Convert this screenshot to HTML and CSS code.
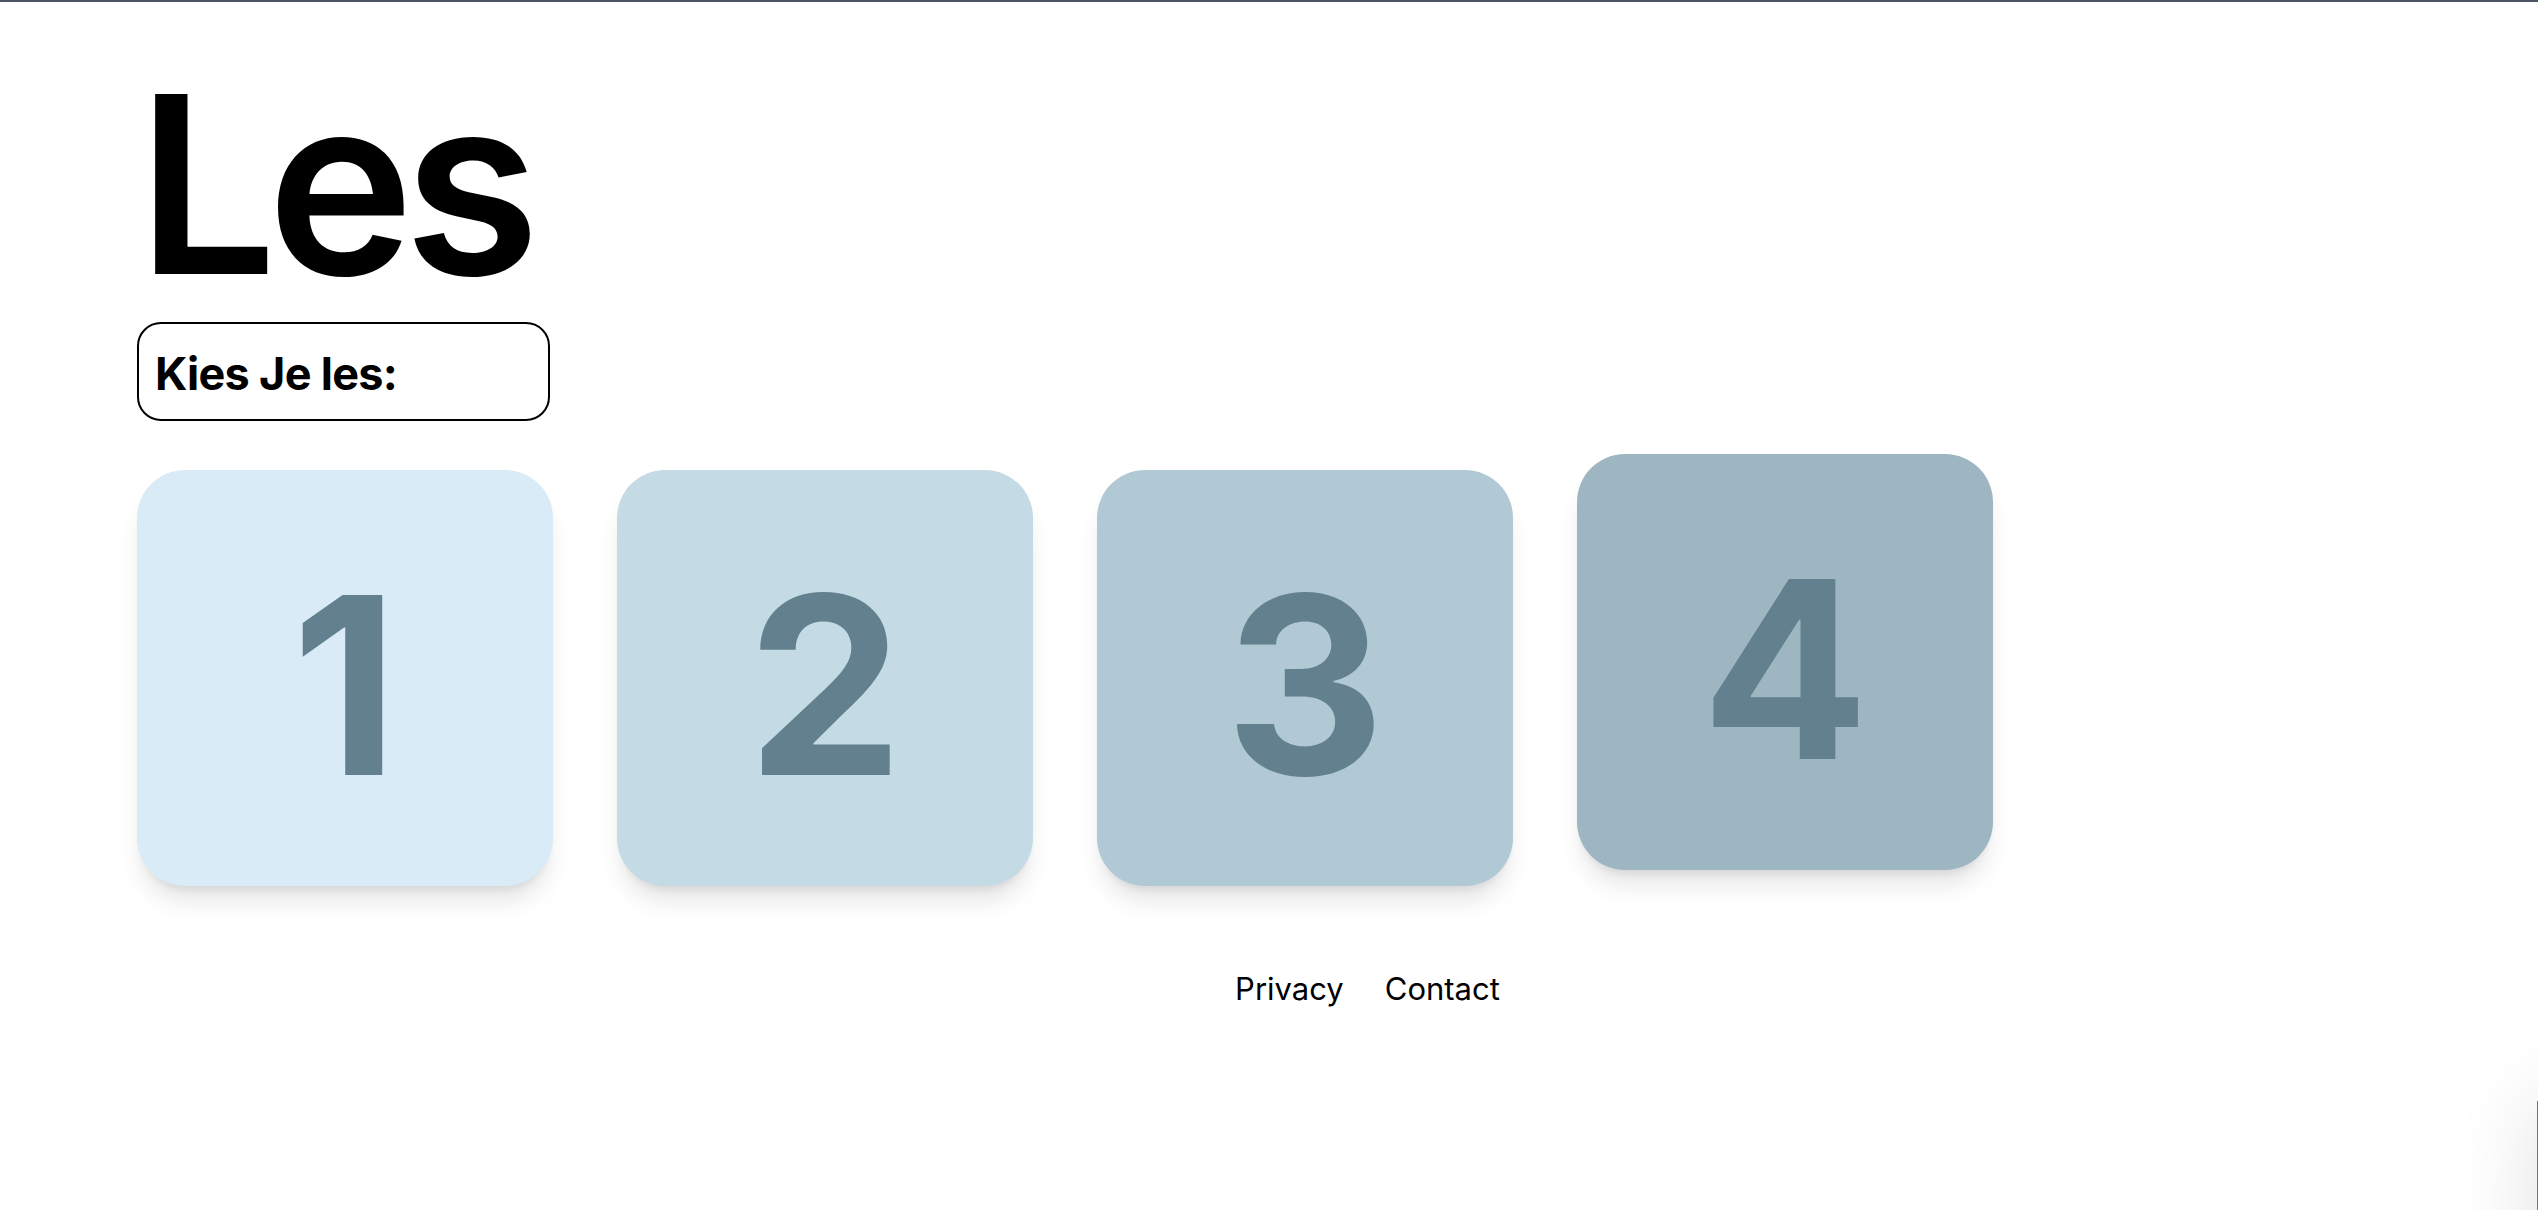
FILE: index.html
```html
<!DOCTYPE html>
<html lang="nl">
<head>
<meta charset="utf-8">
<title>Les</title>
<link rel="stylesheet" href="styles.css">
</head>
<body>
<main class="page">
  <h1 class="title">Les</h1>
  <div class="choose">Kies Je les:</div>
  <div class="cards">
    <a class="card card-1" href="#">1</a>
    <a class="card card-2" href="#">2</a>
    <a class="card card-3" href="#">3</a>
    <a class="card card-4 is-hover" href="#">4</a>
  </div>
</main>
<footer class="footer">
  <a href="#">Privacy</a>
  <a href="#">Contact</a>
</footer>
<div class="side-panel"></div>
</body>
</html>
```
FILE: styles.css
```css
html, body {
  margin: 0;
  padding: 0;
}
body {
  border-top: 2px solid #4b5563;
  font-family: Inter, "Noto Sans", sans-serif;
  color: #000;
  background: #fff;
  overflow: hidden;
  height: 1208px;
}
.page {
  padding-left: 137px;
}
.title {
  margin: 58px 0 0 0;
  font-size: 248px;
  font-weight: 600;
  line-height: 1;
  letter-spacing: -10px;
}
.choose {
  margin-top: 14px;
  width: 413px;
  height: 99px;
  box-sizing: border-box;
  border: 2px solid #000;
  border-radius: 24px;
  padding: 23px 16px 18px;
  font-size: 45px;
  font-weight: 700;
  line-height: 1.2;
  letter-spacing: -0.7px;
}
.cards {
  margin-top: 49px;
  display: flex;
  gap: 64px;
}
.card {
  width: 416px;
  height: 416px;
  box-sizing: border-box;
  padding-top: 14px;
  border-radius: 48px;
  display: flex;
  align-items: center;
  justify-content: center;
  font-size: 248px;
  font-weight: 700;
  line-height: 1;
  color: #62808e;
  text-decoration: none;
  box-shadow: 0 20px 25px -5px rgba(0,0,0,0.1), 0 8px 10px -6px rgba(0,0,0,0.1);
}
.card-1 { background: #d9ebf6; }
.card-2 { background: #c4dae5; }
.card-3 { background: #b1c9d5; }
.card-4 { background: #9eb6c2; }
.card.is-hover { transform: translateY(-16px); }
.footer {
  margin-top: 80px;
  display: flex;
  justify-content: center;
  gap: 41px;
  padding-left: 197px;
  font-size: 31px;
  line-height: 1.5;
}
.footer a {
  color: #000;
  text-decoration: none;
}
.side-panel {
  position: fixed;
  left: 2537px;
  top: 1101px;
  width: 400px;
  height: 400px;
  background: #fff;
  border-left: 1px solid #777;
  box-shadow: 0 0 80px rgba(0,0,0,0.12);
}
```
